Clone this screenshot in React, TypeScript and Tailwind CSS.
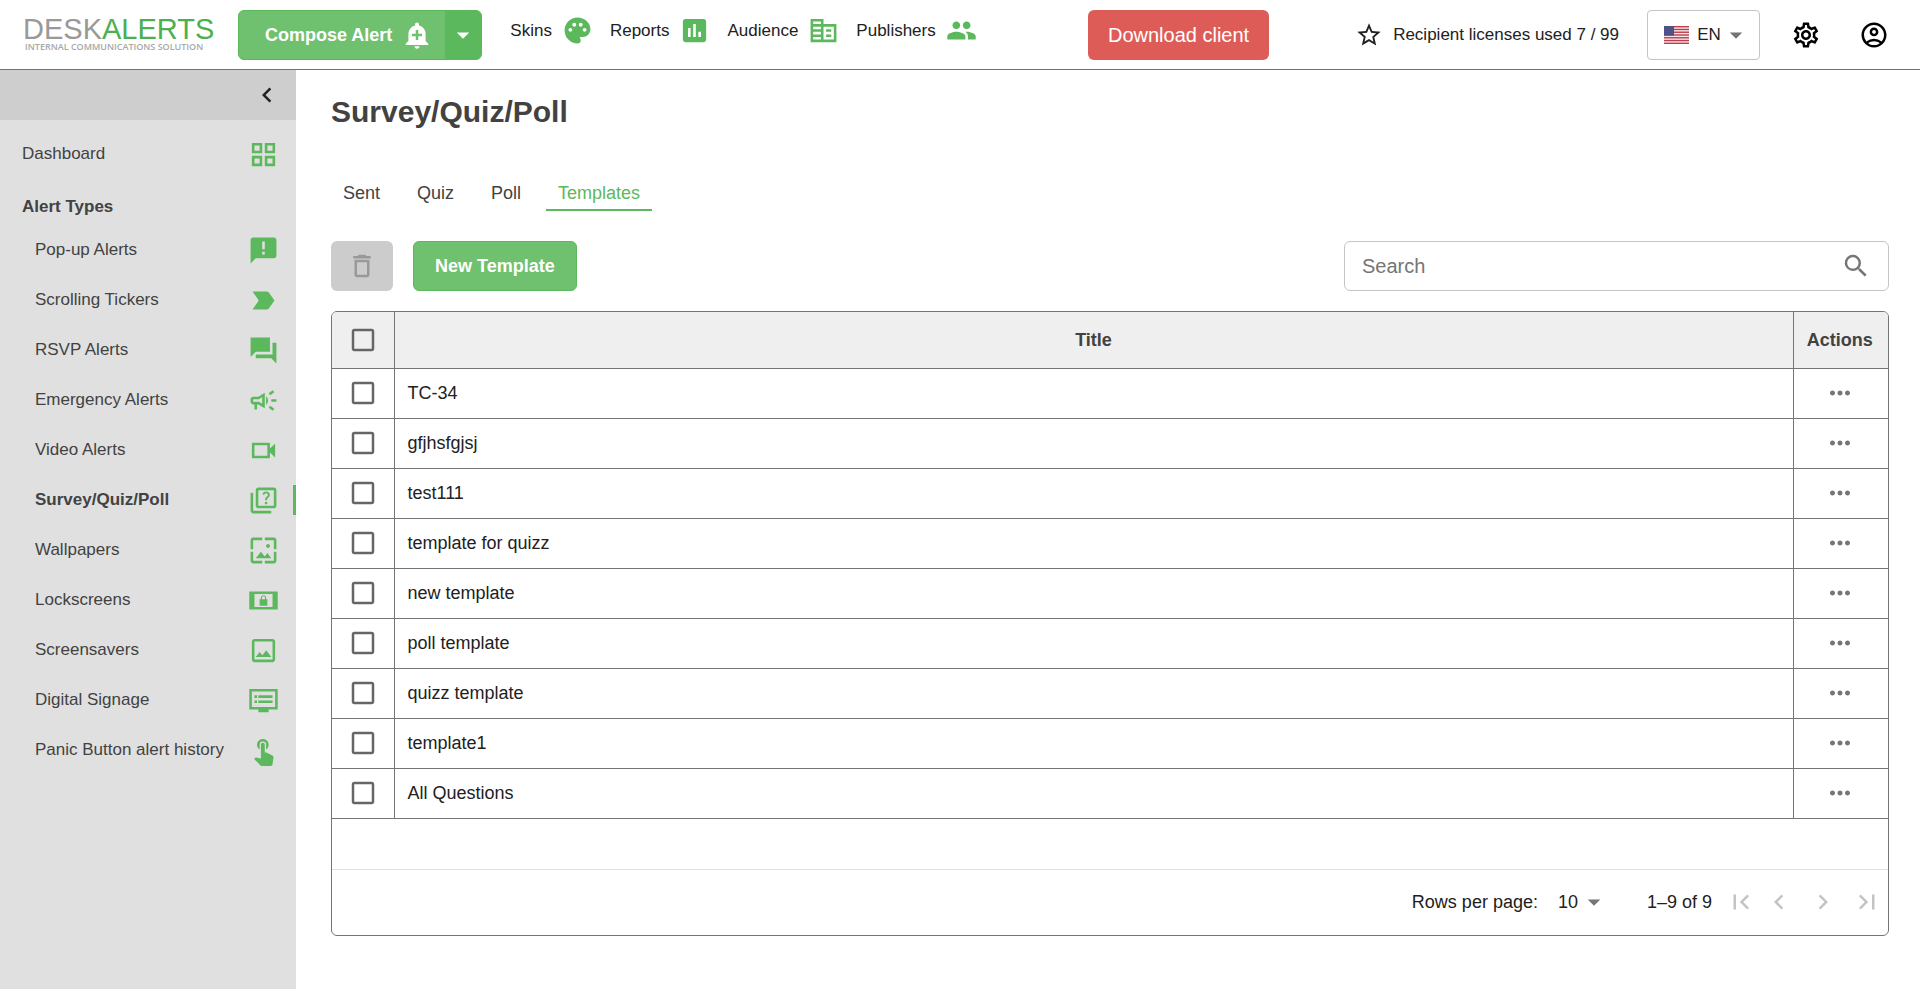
import { useState } from "react";
import type { ReactNode } from "react";
import {
  MdAddAlert, MdPalette, MdPoll, MdStarBorder, MdOutlineSettings,
  MdOutlineCampaign, MdOutlineQuiz, MdOutlineWallpaper, MdTouchApp,
  MdDeleteOutline, MdSearch, MdMoreHoriz, MdFirstPage, MdChevronLeft, MdChevronRight,
  MdLastPage, MdArrowDropDown, MdCheckBox, MdCheckBoxOutlineBlank, MdLabelImportant,
  MdOutlineAccountCircle,
} from "react-icons/md";

const ICON = "size-[31px]";

function Glyph({ d }: { d: string }) {
  return (
    <svg viewBox="0 0 24 24" className={ICON} fill="currentColor" fillRule="evenodd" aria-hidden="true">
      <path d={d} />
    </svg>
  );
}

const alertTypes: { label: string; icon: ReactNode; active?: boolean }[] = [
  { label: "Pop-up Alerts", icon: <Glyph d="M20 2H4c-1.100 0-1.990.9-1.990 2L2 22l4-4h14c1.100 0 2-.9 2-2V4c0-1.100-.9-2-2-2zm-7 9h-2V5h2v6zm0 4h-2v-2h2v2z" /> },
  { label: "Scrolling Tickers", icon: <MdLabelImportant className={ICON} /> },
  { label: "RSVP Alerts", icon: <Glyph d="M22 6h-3v9H6v3h12l4 4V6zM17 13V2H2v15l4-4h11z" /> },
  { label: "Emergency Alerts", icon: <MdOutlineCampaign className={ICON} /> },
  { label: "Video Alerts", icon: <Glyph d="M17 10.500V6.500c0-.280-.220-.500-.500-.500h-13c-.280 0-.500.220-.500.500v11c0 .280.220.500.500.500h13c.280 0 .500-.220.500-.500v-4l4 4v-11l-4 4zM15 16H5V8h10v8z" /> },
  { label: "Survey/Quiz/Poll", icon: <MdOutlineQuiz className={ICON} />, active: true },
  { label: "Wallpapers", icon: <MdOutlineWallpaper className={ICON} /> },
  { label: "Lockscreens", icon: <Glyph d="M1 5h22v14H1V5zM19 17V7H5v10h14zM9 16h6v-5h-1v-1c0-1.110-.9-2-2-2s-2 .9-2 2v1H9v5zm1.800-6c0-.66.54-1.200 1.200-1.200s1.200.54 1.200 1.200v1h-2.400v-1z" /> },
  { label: "Screensavers", icon: <Glyph d="M19 5v14H5V5h14zm0-2H5c-1.100 0-2 .9-2 2v14c0 1.100.9 2 2 2h14c1.100 0 2-.9 2-2V5c0-1.100-.9-2-2-2zM14.140 11.860l-3 3.870L9 13.140 6 17h12l-3.860-5.140z" /> },
  { label: "Digital Signage", icon: <Glyph d="M23 3H1v16h7v2h8v-2h7V3zM21 17H3V5h18v12zM19 8H8v2h11V8zm0 4H8v2h11v-2zM7 8H5v2h2V8zm0 4H5v2h2v-2z" /> },
  { label: "Panic Button alert history", icon: <MdTouchApp className={ICON} /> },
];

const topLinks: { label: string; icon: ReactNode }[] = [
  { label: "Skins", icon: <MdPalette className={ICON} /> },
  { label: "Reports", icon: <MdPoll className={ICON} /> },
  { label: "Audience", icon: <Glyph d="M2 3h10v4h10v14H2V3zM4 5v2h6V5H4zm0 4v2h6V9H4zm0 4v2h6v-2H4zm0 4v2h6v-2H4zM12 9v2h0v8h8V9h-8zM14 11h4v2h-4v-2zm0 4h4v2h-4v-2z" /> },
  { label: "Publishers", icon: <Glyph d="M16 11c1.660 0 2.990-1.340 2.990-3S17.660 5 16 5s-3 1.340-3 3 1.340 3 3 3zm-8 0c1.660 0 2.990-1.340 2.990-3S9.660 5 8 5 5 6.340 5 8s1.340 3 3 3zm0 2c-2.330 0-7 1.170-7 3.500V19h14v-2.500c0-2.330-4.670-3.500-7-3.500zm8 0c-.290 0-.620.020-.970.050 1.160.840 1.970 1.970 1.970 3.450V19h6v-2.500c0-2.330-4.670-3.500-7-3.500z" /> },
];

const rows = ["TC-34", "gfjhsfgjsj", "test111", "template for quizz", "new template", "poll template", "quizz template", "template1", "All Questions"];

function Logo() {
  return (
    <a href="#" className="flex w-[190px] shrink-0 flex-col whitespace-nowrap">
      <span className="flex text-[29px] leading-6 text-[#999999]">
        DESK<span className="text-[#4caf50]">ALERTS</span>
      </span>
      <span className="pl-0.5 font-['Open_Sans',sans-serif] text-[9px] leading-[11px] font-semibold text-[#a8a8a8]">
        INTERNAL COMMUNICATIONS SOLUTION
      </span>
    </a>
  );
}

function Flag() {
  return (
    <svg viewBox="0 0 25 18" className="h-[18px] w-[25px]" aria-hidden="true">
      <rect width="25" height="18" fill="#f3e9ec" />
      {[0, 1, 2, 3, 4, 5, 6].map((i) => (
        <rect key={i} y={(i * 36) / 13} width="25" height={18 / 13} fill="#bd3d4c" />
      ))}
      <rect width="10" height="9.700" fill="#41447b" />
      {[1, 3, 5, 7, 9].map((y) =>
        [1, 3, 5, 7, 9].map((x) => <circle key={`${x}-${y}`} cx={x} cy={y} r="0.400" fill="#c5c6d8" />),
      )}
    </svg>
  );
}

function Tick({ label, checked, onChange }: { label: string; checked: boolean; onChange: () => void }) {
  return (
    <label className="relative inline-flex cursor-pointer rounded text-[#666666] focus-within:bg-gray-200">
      <input type="checkbox" aria-label={label} checked={checked} onChange={onChange} className="sr-only" />
      {checked ? <MdCheckBox className="size-[30px]" /> : <MdCheckBoxOutlineBlank className="size-[30px]" />}
    </label>
  );
}

function Header() {
  return (
    <header className="flex h-[70px] shrink-0 items-center border-b border-[#6b7280] pr-[31px] pl-[23px]">
      <Logo />
      <div className="ml-[25px] flex h-[50px] shrink-0 overflow-hidden rounded-md border border-[#5cb85c] bg-[#5cb85c] text-white">
        <button className="flex items-center gap-[10px] bg-[#6fc16f] pr-[13px] pl-[26px] text-lg font-bold">
          Compose Alert
          <MdAddAlert className="size-[30px]" />
        </button>
        <button aria-label="More compose options" className="flex w-9 items-center justify-center">
          <MdArrowDropDown className="size-[30px]" />
        </button>
      </div>
      <nav className="mb-2 ml-7 flex items-center gap-[17px]">
        {topLinks.map((l) => (
          <a key={l.label} href="#" className="flex items-center gap-[10px]">
            {l.label}
            <span className="text-[#5cb85c]">{l.icon}</span>
          </a>
        ))}
      </nav>
      <button className="ml-auto h-[50px] rounded-md bg-[#de5c58] px-5 text-xl text-white">Download client</button>
      <div className="ml-[86px] flex items-center gap-[10px]">
        <MdStarBorder className="size-7" />
        Recipient licenses used 7 / 99
      </div>
      <button aria-label="Language" className="ml-7 flex h-[50px] w-[113px] items-center justify-center rounded border border-[#c4c4c4] pl-2">
        <Flag />
        <span className="ml-2">EN</span>
        <MdArrowDropDown className="size-[30px] text-[#757575]" />
      </button>
      <button aria-label="Settings" className="ml-[31px]">
        <MdOutlineSettings className="size-[30px] text-black" />
      </button>
      <button aria-label="Account" className="ml-[38px]">
        <MdOutlineAccountCircle className="size-[30px] text-black" />
      </button>
    </header>
  );
}

function Sidebar() {
  return (
    <aside className="w-[296px] shrink-0 bg-[#e0e0e0] text-[#424242]">
      <button aria-label="Collapse menu" className="flex h-[50px] w-full items-center justify-end bg-[#cecece] pr-[14px] text-[#212121]">
        <MdChevronLeft className="size-[30px]" />
      </button>
      <nav className="pt-[9px]">
        <a href="#" className="flex h-[50px] items-center justify-between pr-[17px] pl-[22px]">
          Dashboard
          <span className="text-[#5cb85c]">
            <Glyph d="M3 3v8h8V3H3zm6 6H5V5h4v4zM3 13v8h8v-8H3zm6 6H5v-4h4v4zM13 3v8h8V3h-8zm6 6h-4V5h4v4zM13 13v8h8v-8h-8zm6 6h-4v-4h4v4z" />
          </span>
        </a>
        <h2 className="flex h-[46px] items-center pt-[10px] pl-[22px] font-bold">Alert Types</h2>
        <ul>
          {alertTypes.map((t) => (
            <li key={t.label} className="relative">
              <a href="#" className={t.active ? "flex h-[50px] items-center justify-between pr-[17px] pl-[35px] font-bold" : "flex h-[50px] items-center justify-between pr-[17px] pl-[35px]"}>
                {t.label}
                <span className="text-[#5cb85c]">{t.icon}</span>
              </a>
              {t.active && <span className="absolute top-[10px] right-0 h-[30px] w-[3px] bg-[#5cb85c]" />}
            </li>
          ))}
        </ul>
      </nav>
    </aside>
  );
}

function TemplatesTable() {
  const [selected, setSelected] = useState<number[]>([]);
  const all = selected.length === rows.length;
  const toggle = (i: number) => setSelected(selected.includes(i) ? selected.filter((n) => n !== i) : [...selected, i]);
  return (
    <section className="mt-5 overflow-hidden rounded-md border border-[#757575] text-lg">
      <table className="w-full border-collapse">
        <thead className="bg-[#efefef] text-[#424242]">
          <tr className="h-14 border-b border-[#757575]">
            <th className="w-[62px] border-r border-[#757575]">
              <div className="flex justify-center">
                <Tick label="Select all" checked={all} onChange={() => setSelected(all ? [] : rows.map((_, i) => i))} />
              </div>
            </th>
            <th className="border-r border-[#757575] font-bold">Title</th>
            <th className="w-[95px] pr-0.5 font-bold">Actions</th>
          </tr>
        </thead>
        <tbody>
          {rows.map((r, i) => (
            <tr key={r} className="h-[50px] border-b border-[#757575]">
              <td className="border-r border-[#757575]">
                <div className="flex justify-center">
                  <Tick label={`Select ${r}`} checked={selected.includes(i)} onChange={() => toggle(i)} />
                </div>
              </td>
              <td className="border-r border-[#757575] px-[13px]">{r}</td>
              <td className="pr-0.5">
                <button aria-label={`Actions for ${r}`} className="mx-auto flex text-[#757575]">
                  <MdMoreHoriz className="size-[30px]" />
                </button>
              </td>
            </tr>
          ))}
        </tbody>
      </table>
      <footer className="mt-[50px] flex h-[66px] items-center justify-end border-t border-[#e0e0e0] pr-[6px]">
        <label htmlFor="rows-per-page">Rows per page:</label>
        <div className="relative ml-5 flex items-center">
          <select id="rows-per-page" defaultValue="10" className="appearance-none bg-transparent pr-7">
            <option>10</option>
            <option>25</option>
            <option>50</option>
          </select>
          <MdArrowDropDown className="pointer-events-none absolute -right-0.5 size-[30px] text-[#757575]" />
        </div>
        <span className="ml-10">1–9 of 9</span>
        <div className="ml-[14px] flex items-center text-[#c4c4c4]">
          <button disabled aria-label="First page"><MdFirstPage className="size-[30px]" /></button>
          <button disabled aria-label="Previous page" className="ml-2"><MdChevronLeft className="size-[30px]" /></button>
          <button disabled aria-label="Next page" className="ml-[14px]"><MdChevronRight className="size-[30px]" /></button>
          <button disabled aria-label="Last page" className="ml-[14px]"><MdLastPage className="size-[30px]" /></button>
        </div>
      </footer>
    </section>
  );
}

export default function App() {
  const tab = "flex h-[38px] items-center border-b-2 px-3 pt-1";
  return (
    <div className="flex min-h-screen flex-col bg-white font-['Liberation_Sans',Arial,sans-serif] text-[17px] text-[#212121]">
      <Header />
      <div className="flex grow">
        <Sidebar />
        <main className="min-w-0 grow pr-[31px] pl-[35px]">
          <h1 className="mt-[22px] text-[30px] leading-10 font-bold text-[#424242]">Survey/Quiz/Poll</h1>
          <div role="tablist" className="mt-[41px] flex gap-[13px] text-lg text-[#424242]">
            {["Sent", "Quiz", "Poll"].map((t) => (
              <button key={t} role="tab" aria-selected={false} className={`${tab} border-transparent`}>{t}</button>
            ))}
            <button role="tab" aria-selected className={`${tab} border-[#5cb85c] text-[#5cb85c]`}>Templates</button>
          </div>
          <div className="mt-[30px] flex h-[50px] items-stretch">
            <button disabled aria-label="Delete" className="flex w-[62px] items-center justify-center rounded-md bg-[#cccccc] text-[#999999]">
              <MdDeleteOutline className="size-[30px]" />
            </button>
            <button className="ml-5 rounded-md border border-[#5cb85c] bg-[#6fc16f] px-[21px] text-lg font-bold text-white">New Template</button>
            <label className="ml-auto flex w-[545px] items-center rounded-md border border-[#c4c4c4] px-[17px] text-[#757575]">
              <input type="text" aria-label="Search" placeholder="Search" className="min-w-0 grow text-xl outline-none placeholder:text-[#757575]" />
              <MdSearch className="size-[30px]" />
            </label>
          </div>
          <TemplatesTable />
        </main>
      </div>
    </div>
  );
}
